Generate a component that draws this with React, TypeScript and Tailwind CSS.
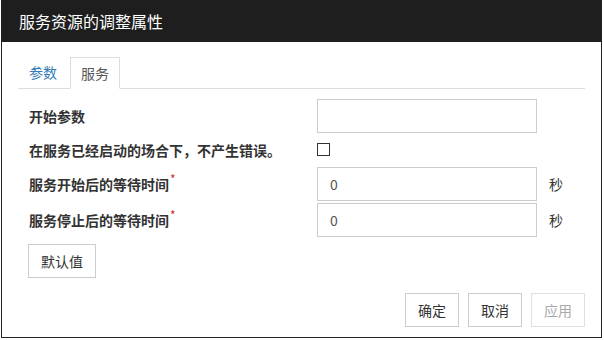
import React from 'react';

const font = { fontFamily: '"Noto Sans CJK SC", "Liberation Sans", sans-serif' };

const Btn = ({ label, disabled = false }: { label: string; disabled?: boolean }) => (
  <button
    className={
      'h-[34px] w-[54px] border bg-white text-[14px] ' +
      (disabled ? 'border-[#e0e0e0] text-[#aaa]' : 'border-[#ccc] text-[#333]')
    }
  >
    {label}
  </button>
);

const Row = ({ label, required = false, children }: { label: string; required?: boolean; children: React.ReactNode }) => (
  <div className="flex h-[34px] items-center">
    <div className="w-[299px] pl-[11px] text-[14px] font-bold text-[#333]">
      {label}
      {required && <sup className="ml-[1px] text-[12px] font-normal text-[#c9302c]">*</sup>}
    </div>
    {children}
  </div>
);

export default function App() {
  return (
    <div className="h-[340px] w-[604px] bg-white" style={font}>
      <div className="ml-[1px] flex h-[338px] w-[601px] flex-col border border-t-0 border-[#222]">
        {/* Title */}
        <div className="-mx-[1px] flex h-[42px] items-center bg-[#1e1e1e] pl-[18px] text-[16px] text-white">
          服务资源的调整属性
        </div>

        <div className="flex flex-1 flex-col px-[16px]">
          {/* Tabs */}
          <div className="mt-[15px] flex h-[32px] items-end border-b border-[#ddd] pl-[2px]">
            <div className="flex h-[31px] items-center px-[9px] text-[14px] text-[#337ab7]">参数</div>
            <div className="-mb-[1px] ml-[4px] flex h-[32px] items-center border border-b-white border-[#ddd] bg-white px-[10px] text-[14px] text-[#555]">
              服务
            </div>
          </div>

          {/* Form */}
          <div className="mt-[10px] flex flex-col">
            <Row label="开始参数">
              <input className="h-[34px] w-[220px] border border-[#ccc] px-[12px] text-[14px] text-[#555] outline-none" />
            </Row>
            <Row label="在服务已经启动的场合下，不产生错误。">
              <span className="mt-[-1px] block h-[13px] w-[13px] border border-[#333] bg-white" />
            </Row>
            <Row label="服务开始后的等待时间" required>
              <input
                defaultValue="0"
                className="h-[34px] w-[220px] border border-[#ccc] px-[12px] text-[14px] text-[#555] outline-none"
              />
              <span className="ml-[12px] text-[14px] text-[#333]">秒</span>
            </Row>
            <div className="mt-[2px]">
              <Row label="服务停止后的等待时间" required>
                <input
                  defaultValue="0"
                  className="h-[34px] w-[220px] border border-[#ccc] px-[12px] text-[14px] text-[#555] outline-none"
                />
                <span className="ml-[12px] text-[14px] text-[#333]">秒</span>
              </Row>
            </div>
          </div>

          <div className="mt-[7px] pl-[10px]">
            <button className="h-[34px] w-[68px] border border-[#ccc] bg-white text-[14px] text-[#333]">默认值</button>
          </div>

          {/* Footer */}
          <div className="mt-[15px] flex justify-end gap-[9px]">
            <Btn label="确定" />
            <Btn label="取消" />
            <Btn label="应用" disabled />
          </div>
        </div>
      </div>
    </div>
  );
}
